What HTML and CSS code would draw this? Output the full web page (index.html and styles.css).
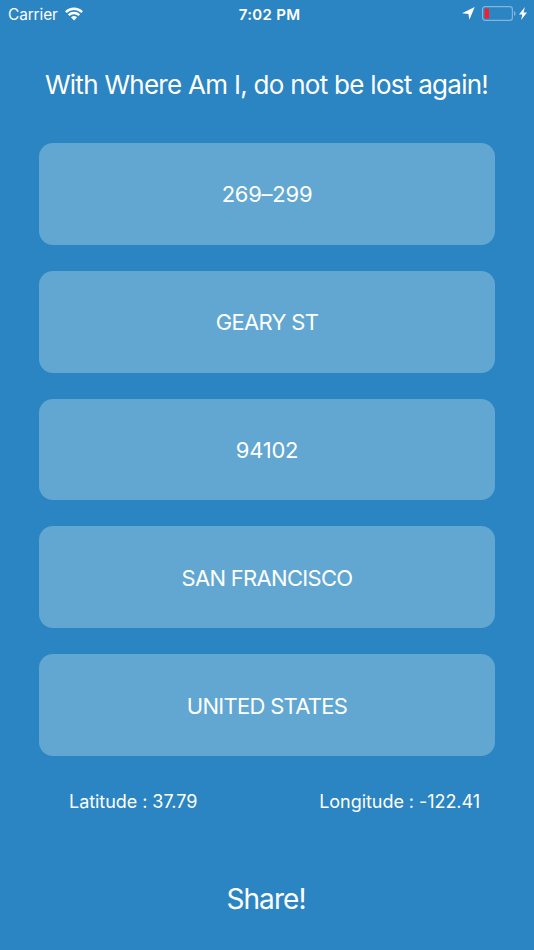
FILE: index.html
```html
<!DOCTYPE html>
<html lang="en">

<head>
    <meta charset="UTF-8">
    <meta name="viewport" content="width=device-width, initial-scale=1.0">
    <title>Where Am I</title>
    <link rel="stylesheet" href="styles.css">
</head>

<body>
    <header class="status-bar">
        <div class="status-left">
            <span class="carrier">Carrier</span>
            <svg class="wifi" viewBox="0 0 18 14" width="18" height="14">
                <path d="M.9 5.1a11.6 11.6 0 0 1 16.2 0M3.7 8.1a7.6 7.6 0 0 1 10.6 0" fill="none" stroke="#fff" stroke-width="2.4" />
                <path d="M6 10.3a4.5 4.5 0 0 1 6 0L9 13.5z" fill="#fff" />
            </svg>
        </div>
        <span class="time">7:02 PM</span>
        <div class="status-right">
            <svg class="location" viewBox="0 0 13 13" width="13" height="13">
                <path d="M12.7 0L7.4 12.8 6.4 6.9 0 6.2z" fill="#fff" />
            </svg>
            <svg class="battery" viewBox="0 0 35 15" width="35" height="15">
                <rect x=".6" y=".6" width="29.8" height="13.8" rx="2.6" fill="none" stroke="#80b6dc" stroke-width="1.2" />
                <rect x="2.7" y="2.5" width="4.3" height="10" rx=".8" fill="#fb1b2b" />
                <path d="M32 5c2 .7 2 4.3 0 5z" fill="#80b6dc" />
            </svg>
            <svg class="bolt" viewBox="0 0 8 13" width="8" height="13">
                <path d="M5.9 0L0 7.5h3.3L2.1 13 8 5.4H4.6z" fill="#fff" />
            </svg>
        </div>
    </header>

    <main>
        <h1>With Where Am I, do not be lost again!</h1>
        <div class="address">
            <div class="card number">269–299</div>
            <div class="card">GEARY ST</div>
            <div class="card number">94102</div>
            <div class="card">SAN FRANCISCO</div>
            <div class="card">UNITED STATES</div>
        </div>
        <div class="coordinates">
            <span class="latitude">Latitude : 37.79</span>
            <span class="longitude">Longitude : -122.41</span>
        </div>
        <button class="share" type="button">Share!</button>
    </main>
</body>

</html>
```
FILE: styles.css
```css
:root {
    --background-color: #2b85c2;
    --card-background: #61a7d2;
    --text-color: #ffffff;
}

* {
    box-sizing: border-box;
    margin: 0;
    padding: 0;
}

body {
    font-family: Inter, sans-serif;
    background-color: var(--background-color);
    color: var(--text-color);
    min-height: 100vh;
}

.status-bar {
    display: grid;
    grid-template-columns: 1fr auto 1fr;
    align-items: center;
    height: 27px;
    padding: 0 7px 0 8px;
    font-size: 15.4px;
}

.status-left,
.status-right {
    display: flex;
    align-items: center;
}

.status-left {
    gap: 7px;
}

.carrier {
    padding-top: 1px;
    letter-spacing: -0.1px;
}

.status-right {
    justify-content: flex-end;
}

.time {
    padding: 1px 0 0 4px;
    font-size: 15px;
    font-weight: 600;
    letter-spacing: 0.3px;
}

.location {
    margin-right: 7px;
}

.battery {
    margin-right: 2px;
}

main {
    display: flex;
    flex-direction: column;
    padding: 0 39px;
}

h1 {
    margin-top: 41px;
    margin-right: 1px;
    font-size: 26px;
    font-weight: 400;
    letter-spacing: -0.72px;
    line-height: 34px;
    text-align: center;
    white-space: nowrap;
}

.address {
    display: grid;
    gap: 26px;
    margin-top: 41px;
}

.card {
    display: flex;
    align-items: center;
    justify-content: center;
    height: 101.8px;
    padding-top: 1px;
    background-color: var(--card-background);
    border-radius: 14px;
    font-size: 22px;
    letter-spacing: -0.7px;
}

.card.number {
    letter-spacing: -0.25px;
}

.coordinates {
    display: flex;
    justify-content: space-between;
    margin-top: 34px;
    padding: 0 15px 0 30px;
    font-size: 18px;
    letter-spacing: -0.05px;
    line-height: 24px;
}

.share {
    align-self: center;
    margin-top: 67px;
    margin-right: 2px;
    background: none;
    border: none;
    color: inherit;
    font-family: inherit;
    font-size: 28px;
    letter-spacing: -0.95px;
    line-height: 36px;
    cursor: pointer;
}
```
